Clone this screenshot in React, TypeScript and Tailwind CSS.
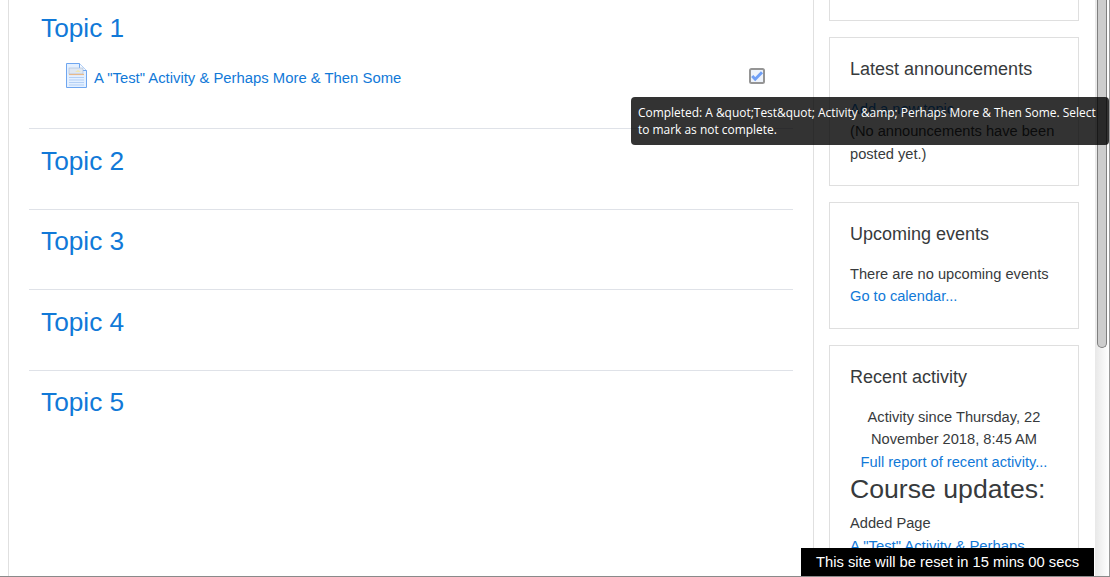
const topics = ['Topic 2', 'Topic 3', 'Topic 4', 'Topic 5']

function PageIcon() {
    return (
        <svg width="21" height="25" viewBox="0 0 21 25" className="shrink-0">
            <path d="M.5.5h13l7 7v17H.5z" fill="#e4f0ff" stroke="#6fa6f0" />
            <path d="M13.5.5v7h7" fill="#f5f9ff" stroke="#6fa6f0" />
            <rect x="3" y="5" width="14" height="6" fill="#dfe7f2" stroke="#a9bcd6" strokeWidth=".6" />
            <path d="M9 9l3-2 3 2z" fill="#efe6b0" />
            <path d="M3 11.5h15" stroke="#e8b98a" strokeWidth="1.2" />
            <path d="M3 14.5h15M3 17h15M3 19.500h15M3 22h15" stroke="#b3cff5" />
        </svg>
    )
}

function CheckIcon() {
    return (
        <svg width="16" height="16" viewBox="0 0 16 16" className="shrink-0">
            <rect x="1" y="1" width="14" height="14" rx="1.500" fill="#eef3fb" stroke="#959595" strokeWidth="2" />
            <path d="M3.200 8l3 3.200 6.800-7" fill="none" stroke="#6f9ff6" strokeWidth="3" />
        </svg>
    )
}

function Card({ title, className, children }: { title: string; className: string; children: React.ReactNode }) {
    return (
        <div className={`shrink-0 border border-[#dfdfdf] bg-white px-5 pt-[20px] ${className}`}>
            <h5 className="mb-[17px] text-[18px] leading-[22.500px] text-[#373a3c]">{title}</h5>
            {children}
        </div>
    )
}

export default function App() {
    return (
        <div
            className="relative flex h-[577px] w-[1110px] overflow-hidden border-b border-[#8a8a8a] bg-white text-[14.650px] leading-[22.500px] text-[#373a3c]"
            style={{ fontFamily: '"Liberation Sans", Arial, sans-serif' }}
        >
            <div className="flex w-[1095px] pl-2">
                {/* Course sections */}
                <main className="w-[806px] shrink-0 border-x border-[#e0e0e0] pl-5 pr-5">
                    <section className="h-[129px] border-b border-[#dfe2e8] pl-3 pt-[12px]">
                        <h3 className="text-[26.250px] leading-[32px] text-[#1179d8]">Topic 1</h3>
                        <div className="mt-[19px] flex items-start pl-[25px] pr-[28px]">
                            <PageIcon />
                            <a className="ml-[7px] flex-1 pt-[4px] text-[14.850px] text-[#1179d8]">A "Test" Activity &amp; Perhaps More &amp; Then Some</a>
                            <div className="pt-[5px]">
                                <CheckIcon />
                            </div>
                        </div>
                    </section>
                    {topics.map((topic) => (
                        <section key={topic} className="h-[80.500px] border-b border-[#dfe2e8] pl-3 pt-[15.500px] last:border-b-0">
                            <h3 className="text-[26.250px] leading-[32px] text-[#1179d8]">{topic}</h3>
                        </section>
                    ))}
                </main>

                {/* Blocks */}
                <aside className="ml-[15px] flex w-[250px] shrink-0 flex-col">
                    <div className="h-[21px] shrink-0 border-x border-b border-[#dfdfdf]" />
                    <Card title="Latest announcements" className="mt-4 h-[149px]">
                        <a className="block text-[#1179d8]">Add a new topic...</a>
                        <p>(No announcements have been posted yet.)</p>
                    </Card>
                    <Card title="Upcoming events" className="mt-4 h-[127px]">
                        <p>There are no upcoming events</p>
                        <a className="block text-[#1179d8]">Go to calendar...</a>
                    </Card>
                    <Card title="Recent activity" className="mt-4 h-[260px]">
                        <p className="text-center">Activity since Thursday, 22 November 2018, 8:45 AM</p>
                        <a className="block text-center text-[#1179d8]">Full report of recent activity...</a>
                        <h3 className="text-[26.650px] leading-[32px]">Course updates:</h3>
                        <p className="mt-[7px]">Added Page</p>
                        <a className="block text-[14.850px] text-[#1179d8]">A "Test" Activity &amp; Perhaps</a>
                    </Card>
                </aside>
            </div>

            {/* Scrollbar */}
            <div className="w-[15px] shrink-0 border-r border-[#9a9a9a] bg-gradient-to-r from-[#e8e8e8] to-white pl-[2px]">
                <div className="h-[348px] w-[10px] rounded-b-[5px] border-x border-b border-[#7f7f7f] bg-[#cdcdcd]" />
            </div>

            {/* Completion tooltip */}
            <div
                className="absolute left-[631px] top-[97px] h-[48px] w-[478px] rounded bg-black/80 px-[7px] py-[7px] text-[11.950px] leading-[17px] text-white"
                style={{ fontFamily: '"Open Sans", sans-serif' }}
            >
                Completed: A &amp;quot;Test&amp;quot; Activity &amp;amp; Perhaps More &amp; Then Some. Select to mark as not complete.
            </div>

            {/* Reset banner */}
            <div className="absolute bottom-0 left-[801px] h-[28px] w-[293px] bg-black pl-[15px] pt-[3px] text-[14.750px] text-white">
                This site will be reset in 15 mins 00 secs
            </div>
        </div>
    )
}
